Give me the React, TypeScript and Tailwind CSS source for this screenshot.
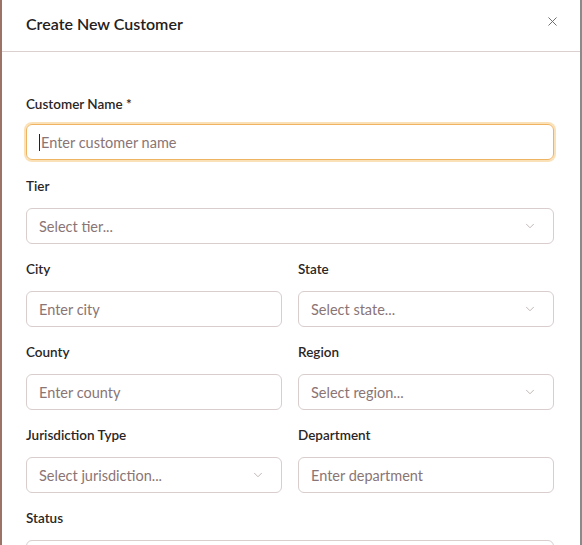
import { ChevronDown, X } from "lucide-react";

// Create-customer dialog, shown cropped to its top half.

function Label({ children }: { children: React.ReactNode }) {
  return <div className="mb-[12px] h-5 text-[13.5px] font-semibold leading-5 text-[#2b2626]">{children}</div>;
}

function TextField({ placeholder, focused }: { placeholder: string; focused?: boolean }) {
  return (
    <div
      className={
        focused
          ? "flex h-9 items-center rounded-md border border-[#eeb462] px-3 ring-2 ring-[#fbe1b8]"
          : "flex h-9 items-center rounded-md border border-[#d9cdcd] px-3"
      }
    >
      {focused && <span className="mr-px h-[17px] w-px bg-[#222]" />}
      <span className="translate-y-px text-[14.5px] text-[#8a7575]">{placeholder}</span>
    </div>
  );
}

function SelectField({ placeholder }: { placeholder: string }) {
  return (
    <div className="flex h-9 items-center justify-between rounded-md border border-[#d9cdcd] pl-3 pr-4">
      <span className="translate-y-px text-[14.5px] text-[#8a7575]">{placeholder}</span>
      <ChevronDown size={14} strokeWidth={1.5} className="text-[#b9abab]" />
    </div>
  );
}

export default function App() {
  return (
    <div
      className="flex h-[545px] w-[582px] overflow-hidden bg-white"
      style={{ fontFamily: "Lato, 'Noto Sans', sans-serif" }}
    >
      <div className="w-[2px] shrink-0 bg-[#9c7467]" />
      <div className="flex-1">
        <div className="flex h-[52px] items-center justify-between border-b border-[#dccfcf] pb-1 pl-6 pr-5">
          <h2 className="text-[16px] font-semibold text-[#242020]">Create New Customer</h2>
          <X size={15} strokeWidth={1.5} className="-mt-1 text-[#666]" />
        </div>
        <div className="space-y-[15px] pl-6 pr-[26px] pt-[42px]">
          <div className="pb-[1px]">
            <div className="mb-[10px] h-5 text-[13.5px] font-semibold leading-5 text-[#2b2626]">
              Customer Name *
            </div>
            <TextField placeholder="Enter customer name" focused />
          </div>
          <div>
            <Label>Tier</Label>
            <SelectField placeholder="Select tier..." />
          </div>
          <div className="grid grid-cols-2 gap-x-4">
            <div>
              <Label>City</Label>
              <TextField placeholder="Enter city" />
            </div>
            <div>
              <Label>State</Label>
              <SelectField placeholder="Select state..." />
            </div>
          </div>
          <div className="grid grid-cols-2 gap-x-4">
            <div>
              <Label>County</Label>
              <TextField placeholder="Enter county" />
            </div>
            <div>
              <Label>Region</Label>
              <SelectField placeholder="Select region..." />
            </div>
          </div>
          <div className="grid grid-cols-2 gap-x-4">
            <div>
              <Label>Jurisdiction Type</Label>
              <SelectField placeholder="Select jurisdiction..." />
            </div>
            <div>
              <Label>Department</Label>
              <TextField placeholder="Enter department" />
            </div>
          </div>
          <div>
            <Label>Status</Label>
            <SelectField placeholder="Select status..." />
          </div>
        </div>
      </div>
      <div className="w-[2px] shrink-0 bg-[#8a8a8a]" />
    </div>
  );
}
